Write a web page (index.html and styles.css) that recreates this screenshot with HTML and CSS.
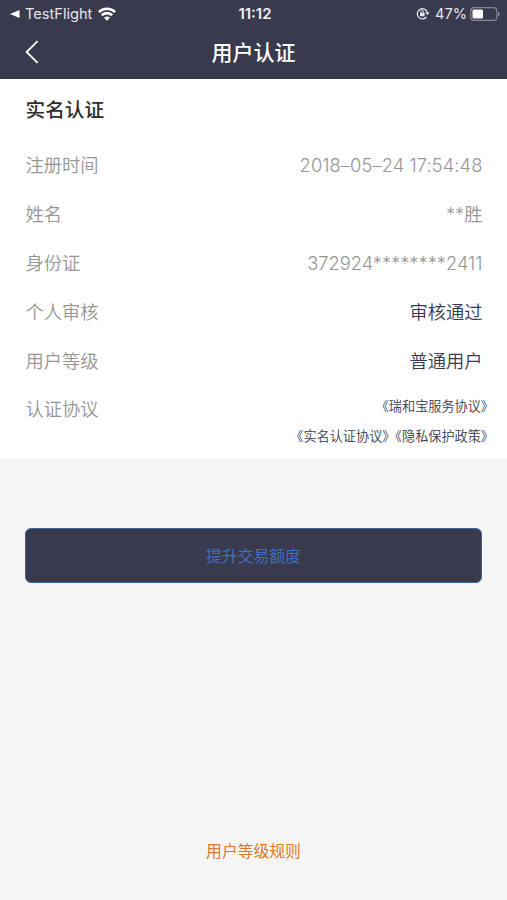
FILE: index.html
```html
<!DOCTYPE html>
<html lang="zh-CN">
<head>
    <meta charset="UTF-8">
    <meta name="viewport" content="width=device-width, initial-scale=1.0">
    <title>用户认证</title>
    <link rel="stylesheet" href="styles.css">
</head>
<body>
    <header class="header">
        <div class="status-bar">
            <div class="status-left">
                <svg class="back-app" width="10" height="8" viewBox="0 0 10 8"><path d="M0 4 L9.5 0 V8 Z" fill="#fff"/></svg>
                <span class="app-name">TestFlight</span>
                <svg width="18" height="14" viewBox="0 0 18 14" fill="none" stroke="#fff" stroke-width="2.6">
                    <path d="M0.9 5.1 C5.4 0.6 12.6 0.6 17.1 5.1"/>
                    <path d="M3.8 8.3 C6.8 5.4 11.2 5.4 14.2 8.3"/>
                    <path d="M9 13.8 L6 10.8 C7.7 9.2 10.3 9.2 12 10.8 Z" fill="#fff" stroke="none"/>
                </svg>
            </div>
            <span class="clock">11:12</span>
            <div class="status-right">
                <!-- rotation lock -->
                <svg width="14" height="13" viewBox="0 0 14 13" fill="none" stroke="#e4e4ec" stroke-width="1.3">
                    <path d="M10.4 10 A5.1 5.1 0 1 1 11.3 5.5"/>
                    <path d="M9.3 5.2 H13.5 L11.4 8.2 Z" fill="#e4e4ec" stroke="none"/>
                    <rect x="4" y="5.8" width="4.6" height="3.5" fill="#e4e4ec" stroke="none"/>
                    <path d="M5 6 V4.9 A1.3 1.3 0 0 1 7.6 4.9 V6" stroke-width="0.9"/>
                </svg>
                <span class="percent">47%</span>
                <svg width="30" height="14" viewBox="0 0 30 14">
                    <rect x="0.7" y="0.7" width="26.1" height="12.6" rx="3.4" fill="none" stroke="#85859a" stroke-width="1.2"/>
                    <rect x="2.5" y="2.5" width="10.5" height="9" rx="1.5" fill="#fff"/>
                    <path d="M28 4.7 C30.3 5.2 30.3 8.8 28 9.3 Z" fill="#85859a"/>
                </svg>
            </div>
        </div>
        <div class="nav-bar">
            <a href="#" class="nav-back">
                <svg width="14" height="24" viewBox="0 0 14 24"><path d="M12.6 1.2 L1.6 12 L12.6 22.8" fill="none" stroke="#fff" stroke-width="1.8"/></svg>
            </a>
            <h1>用户认证</h1>
        </div>
    </header>

    <section class="auth-card">
        <h2>实名认证</h2>
        <div class="row"><span>注册时间</span><span class="value date">2018–05–24 17:54:48</span></div>
        <div class="row"><span>姓名</span><span class="value">**胜</span></div>
        <div class="row"><span>身份证</span><span class="value">372924********2411</span></div>
        <div class="row"><span>个人审核</span><span class="value dark">审核通过</span></div>
        <div class="row"><span>用户等级</span><span class="value dark">普通用户</span></div>
        <div class="row">
            <span>认证协议</span>
            <div class="agreements">
                <div><a href="#">《瑞和宝服务协议》</a></div>
                <div><a href="#">《实名认证协议》</a><a href="#">《隐私保护政策》</a></div>
            </div>
        </div>
    </section>

    <main class="actions">
        <button class="raise-btn">提升交易额度</button>
        <a href="#" class="rules-link">用户等级规则</a>
    </main>
</body>
</html>
```
FILE: styles.css
```css
* {
    margin: 0;
    padding: 0;
    box-sizing: border-box;
}

body {
    height: 900px;
    display: flex;
    flex-direction: column;
    background-color: #f5f5f5;
    font-family: "Inter", "Noto Sans CJK SC", sans-serif;
    overflow: hidden;
}

a {
    color: inherit;
    text-decoration: none;
}

svg {
    display: block;
}

.header {
    height: 79px;
    background-color: #3a3a4f;
    color: #fff;
}

.status-bar {
    display: grid;
    grid-template-columns: 1fr auto 1fr;
    align-items: center;
    height: 27px;
    padding: 0 7px 0 10px;
    font-size: 15px;
}

.status-left,
.status-right {
    display: flex;
    align-items: center;
}

.back-app {
    margin-right: 5px;
}

.app-name {
    margin-right: 6px;
    font-size: 14.6px;
    color: #e4e4ec;
}

.clock {
    font-weight: 600;
    color: #f0f0f5;
}

.status-right {
    justify-content: flex-end;
}

.percent {
    margin: 0 3px 0 5px;
    font-size: 14.6px;
    color: #e4e4ec;
}

.nav-bar {
    display: grid;
    grid-template-columns: 80px 1fr 80px;
    align-items: center;
    height: 50px;
}

.nav-back {
    padding-left: 25px;
}

h1 {
    padding-top: 1px;
    font-size: 21px;
    font-weight: 500;
    line-height: 30px;
    text-align: center;
}

.auth-card {
    height: 379px;
    padding: 16px 24.5px 0 25.5px;
    background-color: #fff;
}

h2 {
    height: 46.4px;
    font-size: 19.7px;
    font-weight: 500;
    line-height: 30px;
    color: #2d2d2d;
}

.row {
    display: flex;
    justify-content: space-between;
    height: 48.8px;
    font-size: 18.3px;
    font-weight: 350;
    line-height: 48.8px;
    color: #969696;
}

.date {
    letter-spacing: 0.1px;
}

.dark {
    color: #3a3a4f;
    font-weight: 350;
}

.agreements {
    margin: 5.5px -11.5px 0 0;
    font-size: 13.15px;
    font-weight: 350;
    line-height: 30.5px;
    text-align: right;
    color: #3a3a4f;
}

.actions {
    flex: 1;
    display: flex;
    flex-direction: column;
    align-items: center;
    justify-content: space-between;
    padding: 70px 25px 33px;
}

.raise-btn {
    width: 100%;
    height: 55px;
    border: 1px solid #3d649e;
    border-radius: 6px;
    background-color: #3a3a4f;
    color: #3e6fbf;
    font-family: inherit;
    font-size: 15.8px;
}

.rules-link {
    font-size: 15.8px;
    line-height: 30px;
    color: #dc7a28;
}
```
